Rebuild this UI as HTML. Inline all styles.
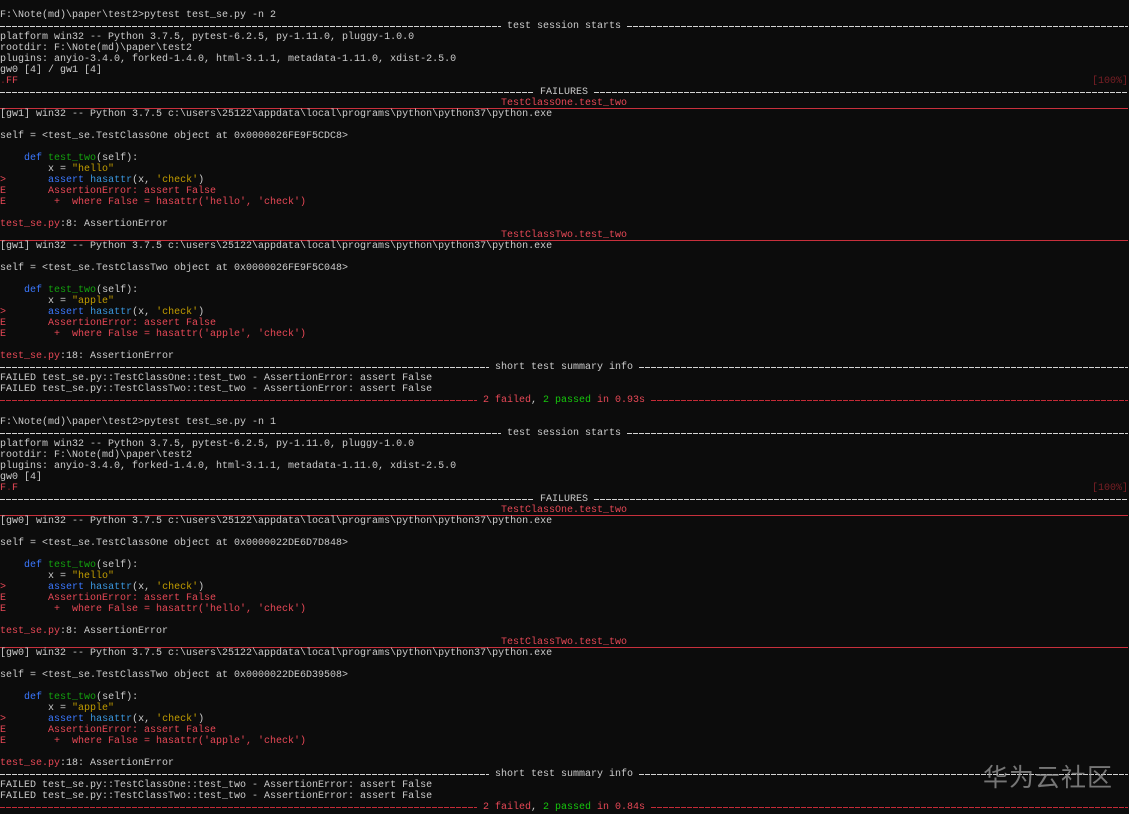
<!DOCTYPE html>
<html><head><meta charset="utf-8"><style>
html,body{margin:0;padding:0;background:#0c0c0c;width:1129px;height:814px;overflow:hidden}
#t{position:absolute;left:0;top:10px;width:1128px;font-family:"Liberation Mono",monospace;font-size:10px;color:#cccccc}
.l{height:11px;line-height:11px;white-space:pre}
.s{display:flex;height:11px;line-height:11px;white-space:pre}
.s>span{white-space:pre}
.f{flex:1 1 0;height:11px;box-sizing:border-box}
.e{background-image:repeating-linear-gradient(90deg,#d4d4d4 0 5px,transparent 5px 6px);background-size:100% 1px;background-position:0 5px;background-repeat:no-repeat}
.re{background-image:repeating-linear-gradient(90deg,#c42b37 0 5px,transparent 5px 6px);background-size:100% 1px;background-position:0 5px;background-repeat:no-repeat}
.s.u{color:#e74856;background:linear-gradient(#c8303c,#c8303c) no-repeat 0 10px/100% 1px}
.p{display:flex;justify-content:space-between;height:11px;line-height:11px;white-space:pre}
.r1{color:#e74856}.dr{color:#7a1f25}.g{color:#16c60c}.b{color:#3b78ff}.gr{color:#13a10e}.y{color:#c19c00}.c{color:#3a96dd}
#wm{position:absolute;left:983px;top:758px;font-family:"Noto Sans CJK SC",sans-serif;font-size:25px;color:#9a9a9a;opacity:.75;letter-spacing:1px}
</style></head><body><div id="t">
<div class="l">F:\Note(md)\paper\test2&gt;pytest test_se.py -n 2</div>
<div class="s"><span class="f e"></span><span> test session starts </span><span class="f e"></span></div>
<div class="l">platform win32 -- Python 3.7.5, pytest-6.2.5, py-1.11.0, pluggy-1.0.0</div>
<div class="l">rootdir: F:\Note(md)\paper\test2</div>
<div class="l">plugins: anyio-3.4.0, forked-1.4.0, html-3.1.1, metadata-1.11.0, xdist-2.5.0</div>
<div class="l">gw0 [4] / gw1 [4]</div>
<div class="p"><span><span class="dr">.</span><span class="r1">FF</span></span><span class="dr">[100%]</span></div>
<div class="s"><span class="f e"></span><span> FAILURES </span><span class="f e"></span></div>
<div class="s u"><span class="f"></span><span> TestClassOne.test_two </span><span class="f"></span></div>
<div class="l">[gw1] win32 -- Python 3.7.5 c:\users\25122\appdata\local\programs\python\python37\python.exe</div>
<div class="l"> </div>
<div class="l">self = &lt;test_se.TestClassOne object at 0x0000026FE9F5CDC8&gt;</div>
<div class="l"> </div>
<div class="l">    <span class="b">def</span> <span class="gr">test_two</span>(self):</div>
<div class="l">        x = <span class="y">"hello"</span></div>
<div class="l"><span class="r1">&gt;</span>       <span class="b">assert</span> <span class="c">hasattr</span>(x, <span class="y">'check'</span>)</div>
<div class="l r1">E       AssertionError: assert False</div>
<div class="l r1">E        +  where False = hasattr('hello', 'check')</div>
<div class="l"> </div>
<div class="l"><span class="r1">test_se.py</span>:8: AssertionError</div>
<div class="s u"><span class="f"></span><span> TestClassTwo.test_two </span><span class="f"></span></div>
<div class="l">[gw1] win32 -- Python 3.7.5 c:\users\25122\appdata\local\programs\python\python37\python.exe</div>
<div class="l"> </div>
<div class="l">self = &lt;test_se.TestClassTwo object at 0x0000026FE9F5C048&gt;</div>
<div class="l"> </div>
<div class="l">    <span class="b">def</span> <span class="gr">test_two</span>(self):</div>
<div class="l">        x = <span class="y">"apple"</span></div>
<div class="l"><span class="r1">&gt;</span>       <span class="b">assert</span> <span class="c">hasattr</span>(x, <span class="y">'check'</span>)</div>
<div class="l r1">E       AssertionError: assert False</div>
<div class="l r1">E        +  where False = hasattr('apple', 'check')</div>
<div class="l"> </div>
<div class="l"><span class="r1">test_se.py</span>:18: AssertionError</div>
<div class="s"><span class="f e"></span><span> short test summary info </span><span class="f e"></span></div>
<div class="l">FAILED test_se.py::TestClassOne::test_two - AssertionError: assert False</div>
<div class="l">FAILED test_se.py::TestClassTwo::test_two - AssertionError: assert False</div>
<div class="s"><span class="f re"></span><span> <span class="r1">2 failed</span>, <span class="g">2 passed</span><span class="r1"> in 0.93s</span> </span><span class="f re"></span></div>
<div class="l"> </div>
<div class="l">F:\Note(md)\paper\test2&gt;pytest test_se.py -n 1</div>
<div class="s"><span class="f e"></span><span> test session starts </span><span class="f e"></span></div>
<div class="l">platform win32 -- Python 3.7.5, pytest-6.2.5, py-1.11.0, pluggy-1.0.0</div>
<div class="l">rootdir: F:\Note(md)\paper\test2</div>
<div class="l">plugins: anyio-3.4.0, forked-1.4.0, html-3.1.1, metadata-1.11.0, xdist-2.5.0</div>
<div class="l">gw0 [4]</div>
<div class="p"><span><span class="r1">F</span><span class="dr">.</span><span class="r1">F</span></span><span class="dr">[100%]</span></div>
<div class="s"><span class="f e"></span><span> FAILURES </span><span class="f e"></span></div>
<div class="s u"><span class="f"></span><span> TestClassOne.test_two </span><span class="f"></span></div>
<div class="l">[gw0] win32 -- Python 3.7.5 c:\users\25122\appdata\local\programs\python\python37\python.exe</div>
<div class="l"> </div>
<div class="l">self = &lt;test_se.TestClassOne object at 0x0000022DE6D7D848&gt;</div>
<div class="l"> </div>
<div class="l">    <span class="b">def</span> <span class="gr">test_two</span>(self):</div>
<div class="l">        x = <span class="y">"hello"</span></div>
<div class="l"><span class="r1">&gt;</span>       <span class="b">assert</span> <span class="c">hasattr</span>(x, <span class="y">'check'</span>)</div>
<div class="l r1">E       AssertionError: assert False</div>
<div class="l r1">E        +  where False = hasattr('hello', 'check')</div>
<div class="l"> </div>
<div class="l"><span class="r1">test_se.py</span>:8: AssertionError</div>
<div class="s u"><span class="f"></span><span> TestClassTwo.test_two </span><span class="f"></span></div>
<div class="l">[gw0] win32 -- Python 3.7.5 c:\users\25122\appdata\local\programs\python\python37\python.exe</div>
<div class="l"> </div>
<div class="l">self = &lt;test_se.TestClassTwo object at 0x0000022DE6D39508&gt;</div>
<div class="l"> </div>
<div class="l">    <span class="b">def</span> <span class="gr">test_two</span>(self):</div>
<div class="l">        x = <span class="y">"apple"</span></div>
<div class="l"><span class="r1">&gt;</span>       <span class="b">assert</span> <span class="c">hasattr</span>(x, <span class="y">'check'</span>)</div>
<div class="l r1">E       AssertionError: assert False</div>
<div class="l r1">E        +  where False = hasattr('apple', 'check')</div>
<div class="l"> </div>
<div class="l"><span class="r1">test_se.py</span>:18: AssertionError</div>
<div class="s"><span class="f e"></span><span> short test summary info </span><span class="f e"></span></div>
<div class="l">FAILED test_se.py::TestClassOne::test_two - AssertionError: assert False</div>
<div class="l">FAILED test_se.py::TestClassTwo::test_two - AssertionError: assert False</div>
<div class="s"><span class="f re"></span><span> <span class="r1">2 failed</span>, <span class="g">2 passed</span><span class="r1"> in 0.84s</span> </span><span class="f re"></span></div>
</div>
<div id="wm">华为云社区</div>
</body></html>
